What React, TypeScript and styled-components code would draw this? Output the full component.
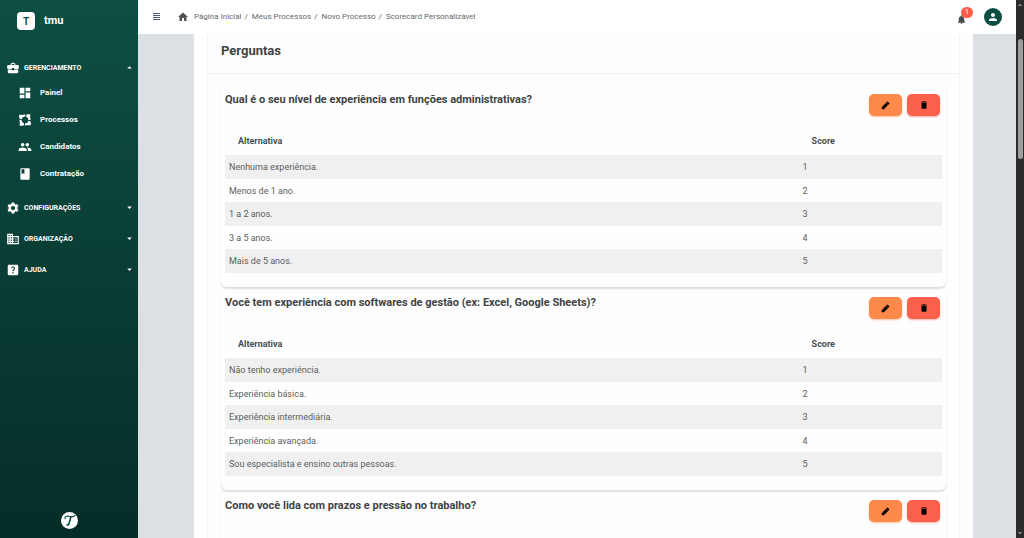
import React from "react";
import styled, { createGlobalStyle } from "styled-components";
import {
  MdArrowDropDown,
  MdArrowDropUp,
  MdBusiness,
  MdBusinessCenter,
  MdClass,
  MdDashboard,
  MdDelete,
  MdHelpCenter,
  MdHome,
  MdNotifications,
  MdPeople,
  MdPerson,
  MdSettings,
} from "react-icons/md";

const GlobalStyle = createGlobalStyle`
  *, *::before, *::after { box-sizing: border-box; }
  body { margin: 0; font-family: Roboto, "Liberation Sans", sans-serif; color: #3f4345; background: #dcdfe4; }
  a { color: inherit; text-decoration: none; }
  button { font: inherit; border: 0; padding: 0; cursor: pointer; background: none; color: inherit; }
  svg { display: block; flex: none; }
`;

const Shell = styled.div`
  display: flex;
  height: 100vh;
  overflow: hidden;
`;

const Sidebar = styled.aside`
  display: flex;
  flex-direction: column;
  flex: none;
  width: 138px;
  color: #fff;
  background: linear-gradient(180deg, #0d4f43 0%, #0a3f36 45%, #052d27 100%);
`;

const Brand = styled.a`
  display: flex;
  align-items: center;
  gap: 9px;
  padding: 11px 17px 0;
  font-size: 11px;
  line-height: 19px;
  font-weight: 700;
`;

const BrandMark = styled.span`
  display: grid;
  place-items: center;
  width: 18px;
  height: 18px;
  border-radius: 4px;
  font-size: 10px;
  background: #fff;
  color: #0d4f43;
`;

const Nav = styled.nav`
  display: flex;
  flex-direction: column;
  gap: 10px;
  padding-top: 27px;
`;

const GroupButton = styled.button`
  display: flex;
  align-items: center;
  gap: 4px;
  width: 100%;
  height: 21px;
  padding: 0 3px 0 6px;
  font-size: 7px;
  font-weight: 700;
  text-align: left;
`;

const GroupLabel = styled.span`
  flex: 1;
`;

const SubList = styled.ul`
  list-style: none;
  margin: 0;
  padding: 1px 0 0;
`;

const SubLink = styled.a`
  display: flex;
  align-items: center;
  gap: 8px;
  height: 27px;
  padding-left: 18px;
  font-size: 8px;
  font-weight: 700;
`;

const SidebarFooter = styled.div`
  display: flex;
  justify-content: center;
  margin-top: auto;
  padding-bottom: 9px;
`;

const Seal = styled.span`
  display: grid;
  place-items: center;
  width: 17px;
  height: 17px;
  border-radius: 50%;
  background: #fff;
  color: #0a4a43;
`;

const Main = styled.div`
  display: flex;
  flex-direction: column;
  flex: 1;
  min-width: 0;
`;

const Topbar = styled.header`
  display: flex;
  align-items: center;
  flex: none;
  height: 34px;
  padding: 0 14px;
  background: #fff;
`;

const MenuButton = styled.button`
  color: #4b5a78;
`;

const Crumbs = styled.ol`
  display: flex;
  align-items: center;
  list-style: none;
  margin: 0 0 0 16px;
  padding: 0;
  font-size: 8px;
  line-height: 12px;
  color: #67696c;

  li { display: flex; align-items: center; }
  li + li::before { content: "/"; padding: 0 4px 0 3px; }
  svg { margin-right: 5px; color: #505356; }
`;

const Actions = styled.div`
  display: flex;
  align-items: center;
  gap: 17px;
  margin-left: auto;
`;

const BellButton = styled.button`
  position: relative;
  color: #464a4e;
  padding-top: 4px;
`;

const Badge = styled.span`
  position: absolute;
  top: -3px;
  left: 5px;
  width: 12px;
  height: 11px;
  border-radius: 6px;
  font-size: 7px;
  line-height: 11px;
  text-align: center;
  background: #fd5d47;
  color: #fff;
`;

const Avatar = styled.button`
  display: grid;
  place-items: center;
  width: 18px;
  height: 18px;
  border-radius: 50%;
  background: #0b4f43;
  color: #fff;
`;

const Content = styled.main`
  flex: 1;
  min-height: 0;
  overflow: hidden;
  padding: 0 43px 0 56px;
  background: #dcdfe4;
`;

const Sheet = styled.div`
  padding: 0 13px;
  background: #fefefe;
`;

const Panel = styled.section`
  border: solid #f3f3f4;
  border-width: 0 1px;
`;

const PanelTitle = styled.h2`
  margin: 0;
  height: 40px;
  padding: 8px 13px;
  border-bottom: 1px solid #f0f0f1;
  font-size: 13px;
  line-height: 18px;
  font-weight: 700;
`;

const Questions = styled.div`
  padding: 10px 13px;
`;

const Card = styled.article`
  padding: 0 4px 14px;
  border-radius: 6px;
  box-shadow: 0 2px 2px rgba(0, 0, 0, 0.13);
`;

const CardHead = styled.div`
  display: flex;
  justify-content: space-between;
  height: 44px;
  padding: 8px 2px 0 0;
`;

const Question = styled.h3`
  margin: 0;
  font-size: 11px;
  line-height: 15px;
  font-weight: 700;
`;

const ButtonPair = styled.div`
  display: flex;
  gap: 5px;
  padding-top: 2px;
`;

const ActionButton = styled.button<{ $tone: "edit" | "remove" }>`
  display: grid;
  place-items: center;
  width: 33px;
  height: 22px;
  border-radius: 5px;
  color: #000;
  background: ${({ $tone }) => ($tone === "edit" ? "#fd8a4a" : "#fb604b")};
  box-shadow: 0 1px 2px ${({ $tone }) => ($tone === "edit" ? "#fd8a4a80" : "#fb604b80")};
`;

const Answers = styled.table`
  width: 100%;
  border-collapse: collapse;
  table-layout: fixed;
  font-size: 9px;
  line-height: 12px;

  th { height: 27px; padding: 0 13px 2px; text-align: left; font-weight: 700; color: #4a4f53; }
  td { height: 23px; padding: 0 4px; color: #5a5e61; }
  tbody tr:nth-child(odd) td { height: 24px; background: #f0f0f0; }
  th:first-child { width: 80%; }
`;

const ScrollTrack = styled.div`
  display: flex;
  flex-direction: column;
  align-items: center;
  justify-content: space-between;
  flex: none;
  width: 8px;
  background: #2b2b2b;
  color: #a0a0a0;
`;

const ScrollThumb = styled.div`
  width: 5px;
  height: 120px;
  margin: 29px 0 auto;
  border-radius: 3px;
  background: #9e9e9e;
`;

const MenuIcon = () => (
  <svg width="9" height="8" viewBox="0 0 9 8" fill="currentColor" aria-hidden="true">
    <path d="M1 0h7v1H1zM1 2h7v1H1zM1 4h7v1H1zM1 6h7v1H1z" />
  </svg>
);

const PencilIcon = () => (
  <svg width="9" height="9" viewBox="0 0 24 24" fill="currentColor" stroke="currentColor" strokeWidth="2" strokeLinejoin="round" aria-hidden="true">
    <path d="M3 16.5V21h4.5L17.8 10.700l-4.500-4.500zM14.600 4.900l4.500 4.500 1.700-1.700c.7-.7.7-1.700 0-2.400l-2.100-2.100c-.7-.7-1.700-.7-2.400 0z" />
  </svg>
);

const CycleIcon = () => (
  <svg width="14" height="14" viewBox="0 0 24 24" fill="none" aria-hidden="true">
    <circle
      cx="12"
      cy="12"
      r="7.800"
      stroke="currentColor"
      strokeWidth="3.600"
      pathLength="80"
      strokeDasharray="17 3"
      strokeDashoffset="-3"
    />
    <path d="M2 3h5l2 2-5 5-2-2zM21 2v5l-2 2-5-5 2-2zM22 21h-5l-2-2 5-5 2 2zM3 22v-5l2-2 5 5-2 2z" fill="currentColor" />
  </svg>
);

const SealIcon = () => (
  <svg width="13" height="13" viewBox="0 0 24 24" fill="none" stroke="currentColor" strokeLinecap="round" aria-hidden="true">
    <path d="M4 9C2 5 7 3 12 4.500s8 1 10-2" strokeWidth="2" />
    <path d="M14.500 5c-1 5-2 10-4 14-1 1.500-2 1.500-3 1" strokeWidth="3" />
  </svg>
);

const subItems = [
  { label: "Painel", icon: <MdDashboard size={14} /> },
  { label: "Processos", icon: <CycleIcon /> },
  { label: "Candidatos", icon: <MdPeople size={14} /> },
  { label: "Contratação", icon: <MdClass size={14} /> },
];

const groups = [
  { label: "CONFIGURAÇÕES", icon: <MdSettings size={14} /> },
  { label: "ORGANIZAÇÃO", icon: <MdBusiness size={14} /> },
  { label: "AJUDA", icon: <MdHelpCenter size={14} /> },
];

const questions = [
  {
    title: "Qual é o seu nível de experiência em funções administrativas?",
    answers: ["Nenhuma experiência.", "Menos de 1 ano.", "1 a 2 anos.", "3 a 5 anos.", "Mais de 5 anos."],
  },
  {
    title: "Você tem experiência com softwares de gestão (ex: Excel, Google Sheets)?",
    answers: [
      "Não tenho experiência.",
      "Experiência básica.",
      "Experiência intermediária.",
      "Experiência avançada.",
      "Sou especialista e ensino outras pessoas.",
    ],
  },
  { title: "Como você lida com prazos e pressão no trabalho?", answers: [] },
];

const QuestionCard = ({ title, answers }: { title: string; answers: string[] }) => (
  <Card>
    <CardHead>
      <Question>{title}</Question>
      <ButtonPair>
        <ActionButton $tone="edit" aria-label="Editar"><PencilIcon /></ActionButton>
        <ActionButton $tone="remove" aria-label="Excluir"><MdDelete size={10} /></ActionButton>
      </ButtonPair>
    </CardHead>
    {answers.length > 0 && (
      <Answers>
        <thead>
          <tr><th>Alternativa</th><th>Score</th></tr>
        </thead>
        <tbody>
          {answers.map((answer, i) => (
            <tr key={answer}><td>{answer}</td><td>{i + 1}</td></tr>
          ))}
        </tbody>
      </Answers>
    )}
  </Card>
);

export default function App() {
  return (
    <>
      <GlobalStyle />
      <Shell>
        <Sidebar>
          <Brand href="#"><BrandMark>T</BrandMark>tmu</Brand>
          <Nav>
            <div>
              <GroupButton aria-expanded="true">
                <MdBusinessCenter size={14} />
                <GroupLabel>GERENCIAMENTO</GroupLabel>
                <MdArrowDropUp size={11} />
              </GroupButton>
              <SubList>
                {subItems.map(({ label, icon }) => (
                  <li key={label}><SubLink href="#">{icon}{label}</SubLink></li>
                ))}
              </SubList>
            </div>
            {groups.map(({ label, icon }) => (
              <GroupButton key={label} aria-expanded="false">
                {icon}
                <GroupLabel>{label}</GroupLabel>
                <MdArrowDropDown size={11} />
              </GroupButton>
            ))}
          </Nav>
          <SidebarFooter><Seal><SealIcon /></Seal></SidebarFooter>
        </Sidebar>
        <Main>
          <Topbar>
            <MenuButton aria-label="Menu"><MenuIcon /></MenuButton>
            <Crumbs>
              <li><MdHome size={12} /><a href="#">Página Inicial</a></li>
              <li><a href="#">Meus Processos</a></li>
              <li><a href="#">Novo Processo</a></li>
              <li><a href="#">Scorecard Personalizável</a></li>
            </Crumbs>
            <Actions>
              <BellButton aria-label="Notificações"><MdNotifications size={11} /><Badge>1</Badge></BellButton>
              <Avatar aria-label="Conta"><MdPerson size={12} /></Avatar>
            </Actions>
          </Topbar>
          <Content>
            <Sheet>
              <Panel>
                <PanelTitle>Perguntas</PanelTitle>
                <Questions>
                  {questions.map((q) => <QuestionCard key={q.title} {...q} />)}
                </Questions>
              </Panel>
            </Sheet>
          </Content>
        </Main>
        <ScrollTrack aria-hidden="true">
          <MdArrowDropUp size={10} />
          <ScrollThumb />
          <MdArrowDropDown size={10} />
        </ScrollTrack>
      </Shell>
    </>
  );
}
